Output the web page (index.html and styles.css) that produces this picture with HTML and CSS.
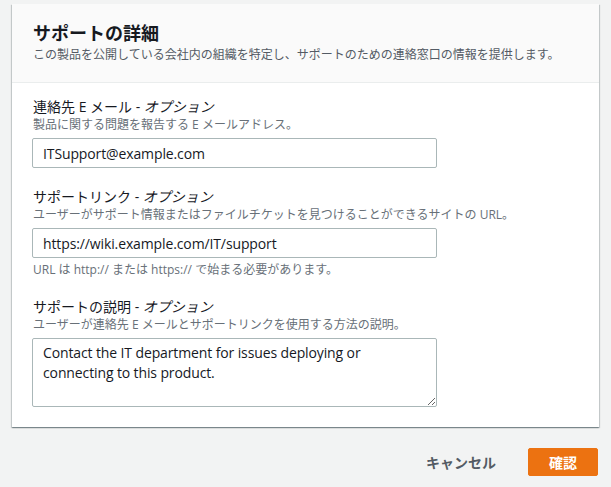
FILE: index.html
```html
<!DOCTYPE html>
<html lang="ja">
<head>
<meta charset="utf-8">
<link rel="stylesheet" href="styles.css">
</head>
<body>
<div class="page">
  <div class="card">
    <div class="card-header">
      <h2 class="title">サポートの詳細</h2>
      <p class="subtitle">この製品を公開している会社内の組織を特定し、サポートのための連絡窓口の情報を提供します。</p>
    </div>
    <div class="card-body">
      <div class="field">
        <div class="label">連絡先 E メール - <i>オプション</i></div>
        <div class="desc">製品に関する問題を報告する E メールアドレス。</div>
        <input class="input" type="text" value="ITSupport@example.com">
      </div>
      <div class="field">
        <div class="label">サポートリンク - <i>オプション</i></div>
        <div class="desc">ユーザーがサポート情報またはファイルチケットを見つけることができるサイトの URL。</div>
        <input class="input" type="text" value="https://wiki.example.com/IT/support">
        <div class="constraint">URL は http:// または https:// で始まる必要があります。</div>
      </div>
      <div class="field">
        <div class="label">サポートの説明 - <i>オプション</i></div>
        <div class="desc">ユーザーが連絡先 E メールとサポートリンクを使用する方法の説明。</div>
        <textarea class="textarea">Contact the IT department for issues deploying or connecting to this product.</textarea>
      </div>
    </div>
  </div>
  <div class="actions">
    <button class="btn-link">キャンセル</button>
    <button class="btn-primary">確認</button>
  </div>
</div>
</body>
</html>
```

FILE: styles.css
```css
* { box-sizing: border-box; }
html, body {
  margin: 0;
  background: #f2f3f3;
  font-family: "Open Sans", "Noto Sans CJK JP", sans-serif;
  color: #16191f;
}
.page {
  padding: 4px 12px 0 12px;
}
.card {
  background: #fff;
  box-shadow: 0 1px 1px 0 rgba(0,28,36,.3), 1px 1px 1px 0 rgba(0,28,36,.15), -1px 1px 1px 0 rgba(0,28,36,.15);
}
.card-header {
  background: #fafafa;
  border-bottom: 1px solid #eaeded;
  padding: 17px 20px 19px 21px;
}
.title {
  margin: 0;
  font-size: 18px;
  font-weight: 700;
  line-height: 24px;
  color: #16191f;
}
.subtitle {
  margin: 2px 0 0 0;
  font-size: 12px;
  line-height: 16px;
  color: #545b64;
}
.card-body {
  padding: 14px 20px 20px 21px;
  display: flex;
  flex-direction: column;
  gap: 19px;
}
.field {
  display: flex;
  flex-direction: column;
}
.label {
  font-size: 14px;
  line-height: 20px;
  color: #16191f;
}
.desc {
  font-size: 12px;
  line-height: 16px;
  color: #687078;
}
.input, .textarea {
  margin-top: 5px;
  width: 405px;
  margin-left: -1px;
  border: 1px solid #aab7b8;
  border-radius: 2px;
  font-family: "Open Sans", "Noto Sans CJK JP", sans-serif;
  font-size: 14px;
  letter-spacing: -0.12px;
  color: #16191f;
  background: #fff;
}
.input {
  height: 30px;
  padding: 4px 10px;
}
.textarea {
  height: 69px;
  padding: 4px 10px;
  line-height: 20px;
  resize: vertical;
}
.constraint {
  margin-top: 4px;
  font-size: 12px;
  line-height: 16px;
  color: #687078;
}
.actions {
  display: flex;
  justify-content: flex-end;
  align-items: center;
  gap: 32px;
  padding: 21px 1px 0 0;
}
.btn-link {
  background: none;
  border: none;
  font-family: "Open Sans", "Noto Sans CJK JP", sans-serif;
  font-size: 14px;
  font-weight: 700;
  color: #545b64;
  padding: 4px 0;
}
.btn-primary {
  background: #ec7211;
  border: 1px solid #ec7211;
  border-radius: 2px;
  color: #fff;
  font-family: "Open Sans", "Noto Sans CJK JP", sans-serif;
  font-size: 14px;
  font-weight: 700;
  width: 70px;
  height: 28px;
  padding: 0;
}
```
